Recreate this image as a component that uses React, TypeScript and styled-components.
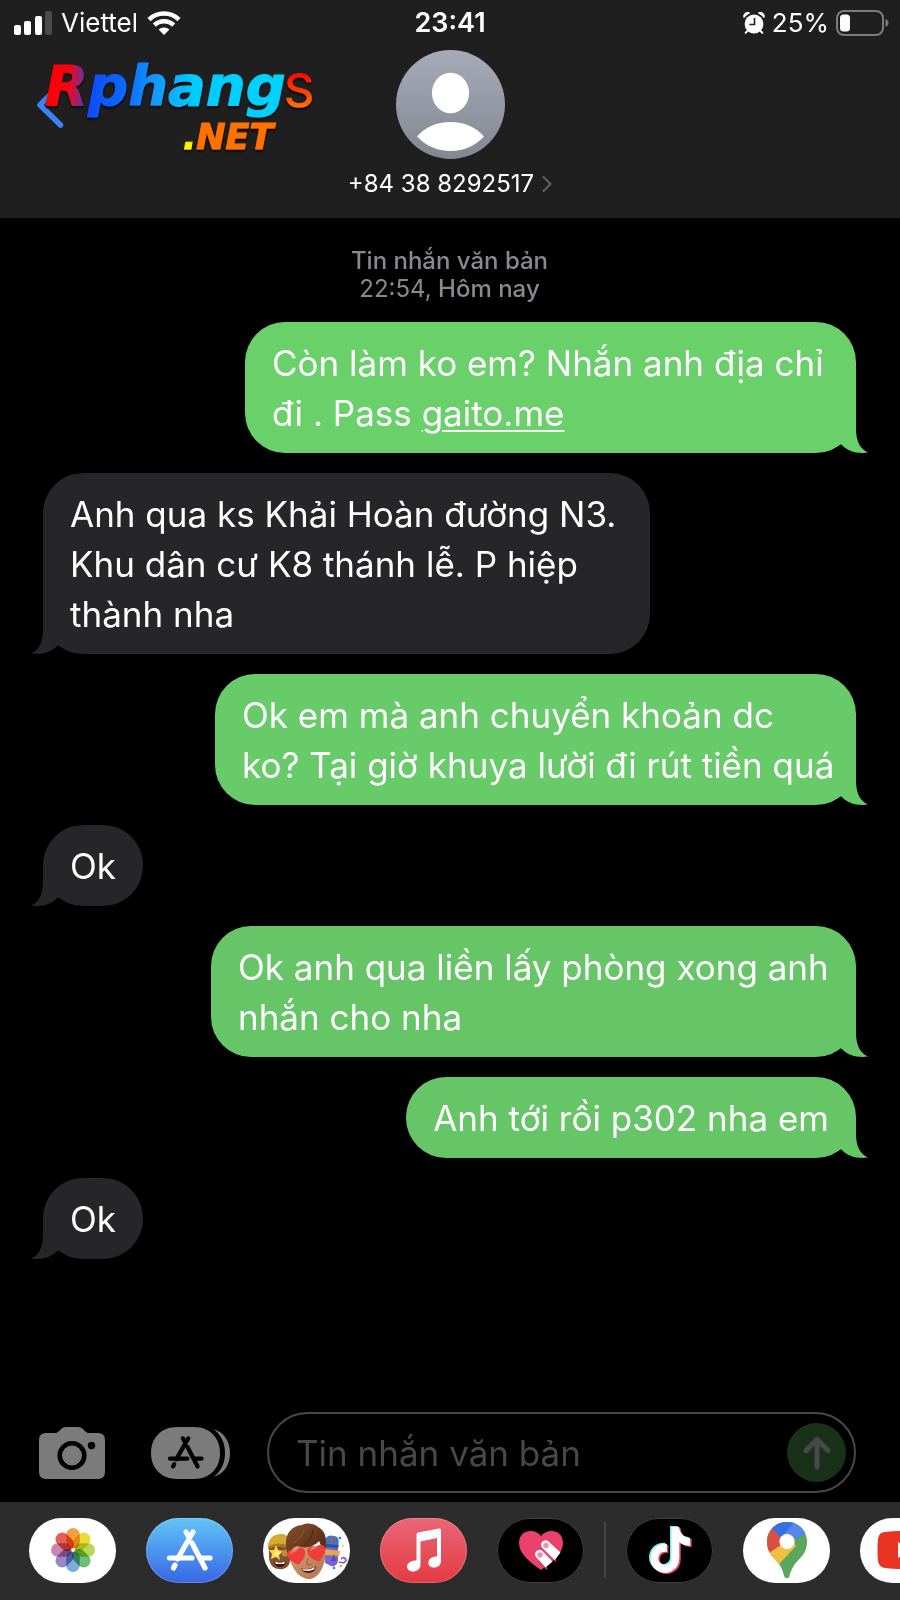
import React from "react";
import styled, { createGlobalStyle } from "styled-components";

const GlobalStyle = createGlobalStyle`
  *, *::before, *::after { box-sizing: border-box; }
  html, body { margin: 0; padding: 0; background: #000; }
  body {
    font-family: Inter, "Noto Sans", sans-serif;
    color: #fff;
    overflow-x: hidden;
  }
  button, input { font: inherit; color: inherit; }
  svg { display: block; }
`;

const Screen = styled.div`
  display: flex;
  flex-direction: column;
  min-height: 100vh;
  overflow: hidden;
`;

const Header = styled.header`
  background: #1f1f1f;
  padding-bottom: 19px;
`;

const StatusBar = styled.div`
  display: grid;
  grid-template-columns: 1fr auto 1fr;
  align-items: center;
  height: 46px;
  padding: 0 11px;
  font-size: 26px;
  line-height: 32px;
`;

const StatusGroup = styled.div<{ $end?: boolean }>`
  display: flex;
  align-items: center;
  gap: ${(p) => (p.$end ? 7 : 9)}px;
  padding-left: 3px;
  justify-content: ${(p) => (p.$end ? "flex-end" : "flex-start")};
`;

const Clock = styled.time`
  font-size: 27px;
  font-weight: 600;
`;

const ContactRow = styled.div`
  display: grid;
  grid-template-columns: 1fr auto 1fr;
  align-items: start;
  padding: 4px 36px 0;
`;

const BackButton = styled.button`
  justify-self: start;
  padding: 0;
  border: 0;
  background: none;
  cursor: pointer;
`;

const ContactButton = styled.button`
  display: flex;
  flex-direction: column;
  align-items: center;
  gap: 10px;
  padding: 0;
  border: 0;
  background: none;
  cursor: pointer;
`;

const ContactName = styled.span`
  display: flex;
  align-items: center;
  gap: 8px;
  font-size: 24px;
  line-height: 30px;
  white-space: nowrap;
`;

const Conversation = styled.main`
  flex: 1;
  padding: 29px 44px 40px 43px;
`;

const DateLabel = styled.div`
  margin-bottom: 19px;
  text-align: center;
  color: #89898e;
  font-size: 24px;
  line-height: 28px;
  font-weight: 500;
`;

const TimeText = styled.time`
  font-weight: 400;
`;

const MessageList = styled.div`
  display: flex;
  flex-direction: column;
  gap: 20px;
`;

type Side = "in" | "out";

const Bubble = styled.div<{ $side: Side; $tone: string; $width?: number }>`
  position: relative;
  isolation: isolate;
  align-self: ${(p) => (p.$side === "out" ? "flex-end" : "flex-start")};
  width: ${(p) => (p.$width ? `${p.$width}px` : "auto")};
  max-width: 100%;
  padding: 16px 27px 15px;
  border-radius: 40px;
  background: ${(p) => p.$tone};
  font-size: 35px;
  line-height: 50px;
  white-space: nowrap;
`;

const Tail = styled.svg<{ $side: Side }>`
  position: absolute;
  z-index: -1;
  bottom: 0;
  ${(p) => (p.$side === "out" ? "right: -12px;" : "left: -12px; transform: scaleX(-1);")}
`;

const MessageLink = styled.a`
  color: inherit;
  text-decoration: underline;
  text-decoration-thickness: 2px;
  text-underline-offset: 4px;
`;

const Composer = styled.form`
  display: flex;
  align-items: center;
  padding: 0 44px 9px 39px;
`;

const ToolButton = styled.button<{ $space: number }>`
  flex: none;
  margin-right: ${(p) => p.$space}px;
  padding: 0;
  border: 0;
  background: none;
  cursor: pointer;
`;

const Field = styled.div`
  flex: 1;
  display: flex;
  align-items: center;
  min-width: 0;
  height: 81px;
  padding: 0 8px 0 27px;
  border: 2px solid #48484a;
  border-radius: 41px;
`;

const TextInput = styled.input`
  flex: 1;
  min-width: 0;
  padding: 0;
  border: 0;
  outline: 0;
  background: none;
  font-size: 35px;
  line-height: 50px;
  &::placeholder { color: #48484a; opacity: 1; }
`;

const SendButton = styled.button`
  flex: none;
  display: grid;
  place-items: center;
  width: 59px;
  height: 59px;
  padding: 0;
  border: 0;
  border-radius: 50%;
  background: #193019;
`;

const Dock = styled.nav`
  display: flex;
  align-items: center;
  gap: 30px;
  height: 98px;
  padding: 0 0 2px 29px;
  background: #2c2c2c;
  overflow: hidden;
`;

const AppButton = styled.button<{ $fill: string; $edge?: string }>`
  flex: none;
  display: grid;
  place-items: center;
  width: 87px;
  height: 65px;
  padding: 0;
  border: 0;
  border-radius: 33px;
  background: ${(p) => p.$fill};
  box-shadow: inset 0 0 0 1px ${(p) => p.$edge ?? "transparent"};
  overflow: hidden;
  cursor: pointer;
`;

const Divider = styled.span`
  flex: none;
  width: 2px;
  height: 56px;
  margin: 0 -10px;
  background: #464646;
`;

const SignalIcon = () => (
  <svg width="38" height="24" viewBox="0 0 38 24" fill="#fff" aria-hidden="true">
    <rect x="0" y="14" width="7" height="10" rx="2" />
    <rect x="10" y="10" width="7" height="14" rx="2" />
    <rect x="21" y="5" width="7" height="19" rx="2" />
    <rect x="31" y="0" width="7" height="24" rx="2" fill="#4a4a4a" />
  </svg>
);

const WifiIcon = () => (
  <svg width="34" height="24" viewBox="0 0 34 24" aria-hidden="true">
    <g fill="none" stroke="#fff" strokeWidth="4.6">
      <path d="M2 8.6A21.5 21.5 0 0 1 32 8.6" />
      <path d="M7.4 14.2A13.6 13.6 0 0 1 26.6 14.2" />
    </g>
    <path d="M17 24l-5.4-5.4a7.8 7.8 0 0 1 10.8 0z" fill="#fff" />
  </svg>
);

const AlarmIcon = () => (
  <svg width="22" height="22" viewBox="0 0 22 22" aria-hidden="true">
    <path d="M1 5.6A13 13 0 0 1 6.6 1 3.8 3.8 0 0 0 1 5.6zM21 5.6A13 13 0 0 0 15.4 1 3.8 3.8 0 0 1 21 5.6z" fill="#fff" stroke="#fff" />
    <path d="M5 18.5l-2.3 2.3M17 18.5l2.3 2.3" stroke="#fff" strokeWidth="2" strokeLinecap="round" />
    <circle cx="11" cy="12" r="9.4" fill="#fff" />
    <path d="M11.5 6v6.5H6.4" fill="none" stroke="#1f1f1f" strokeWidth="1.6" />
  </svg>
);

const BatteryIcon = () => (
  <svg width="53" height="26" viewBox="0 0 53 26" aria-hidden="true">
    <rect x="1" y="1" width="46" height="24" rx="7" fill="none" stroke="#7c7c7c" strokeWidth="2" />
    <rect x="4" y="4.500" width="10" height="17" rx="3.500" fill="#fff" />
    <path d="M49.500 9c4 1.500 4 6.500 0 8z" fill="#7c7c7c" />
  </svg>
);

const BrandLogo = () => (
  <svg width="282" height="106" viewBox="0 0 282 106" aria-hidden="true">
    <defs>
      <linearGradient id="brandMain" gradientUnits="userSpaceOnUse" x1="10" y1="0" x2="252" y2="14">
        <stop offset="0" stopColor="#ff0000" />
        <stop offset="0.1" stopColor="#fb0510" />
        <stop offset="0.165" stopColor="#6a2fa0" />
        <stop offset="0.19" stopColor="#0a4cff" />
        <stop offset="0.32" stopColor="#0a66ff" />
        <stop offset="0.46" stopColor="#1498ff" />
        <stop offset="0.62" stopColor="#00ccff" />
        <stop offset="1" stopColor="#00d2ff" />
      </linearGradient>
      <linearGradient id="brandS" x1="0" y1="0" x2="0" y2="1">
        <stop offset="0.25" stopColor="#ff0a00" />
        <stop offset="0.85" stopColor="#ff7a00" />
      </linearGradient>
      <filter id="brandShadow" x="-5%" y="-10%" width="110%" height="130%">
        <feDropShadow dx="0" dy="2" stdDeviation="1" floodColor="#000" floodOpacity="0.8" />
      </filter>
    </defs>
    <path d="M24 35L4 55l20.500 20" fill="none" stroke="#3d82f7" strokeWidth="5.500" strokeLinecap="round" strokeLinejoin="round" />
    <g filter="url(#brandShadow)">
      <text x="9" y="55" fontFamily="DejaVu Sans" fontWeight="700" fontStyle="oblique" fontSize="56" fill="url(#brandMain)" stroke="url(#brandMain)">Rphang</text>
      <text x="248" y="57" fontFamily="Inter" fontWeight="500" fontSize="47" fill="url(#brandS)">S</text>
      <text x="147" y="99" fontFamily="DejaVu Sans" fontWeight="700" fontStyle="oblique" fontSize="35" fill="#ff7200" stroke="#ff7200">
        <tspan fill="#fff200" stroke="#fff200">.</tspan>NET
      </text>
    </g>
  </svg>
);

const Avatar = () => (
  <svg width="109" height="109" viewBox="0 0 109 109" aria-hidden="true">
    <defs>
      <linearGradient id="avatarFill" x1="0" y1="0" x2="0" y2="1">
        <stop offset="0" stopColor="#a7abb9" />
        <stop offset="1" stopColor="#838791" />
      </linearGradient>
    </defs>
    <circle cx="54.5" cy="54.5" r="54.500" fill="url(#avatarFill)" />
    <ellipse cx="54.500" cy="43" rx="18.600" ry="20.200" fill="#fff" />
    <path d="M21 86.500C29 77 41 72 54.500 72S80 77 88 86.500C79 96 68 101 54.500 101S30 96 21 86.500z" fill="#fff" />
  </svg>
);

const NameChevron = () => (
  <svg width="10" height="18" viewBox="0 0 10 18" aria-hidden="true">
    <path d="M1.500 2L8.500 9l-7 7" fill="none" stroke="#626266" strokeWidth="2" strokeLinecap="round" />
  </svg>
);

const BubbleTail = ({ side, tone }: { side: Side; tone: string }) => (
  <Tail $side={side} width="46" height="44" viewBox="0 0 46 44" aria-hidden="true">
    <path d="M34 2V20C34 32 38 40 46 43.500C37 45 26 43 20 36L6 30 20 4z" fill={tone} />
  </Tail>
);

const CameraIcon = () => (
  <svg width="66" height="52" viewBox="0 0 66 52" aria-hidden="true">
    <path d="M7 6H16C19 6 20 4 22 2Q24 0 27 0H39Q42 0 44 2C46 4 47 6 50 6H59Q66 6 66 13V45Q66 52 59 52H7Q0 52 0 45V13Q0 6 7 6z" fill="#7b7b7b" />
    <circle cx="33" cy="28.500" r="12.300" fill="none" stroke="#000" strokeWidth="4.600" />
    <circle cx="52.500" cy="18.500" r="3.700" fill="#000" />
  </svg>
);

const StoreGlyph = () => (
  <>
    <path d="M19 3L22.500 9M26 3L10.500 30" />
    <path d="M2.500 29H25M33 29H43" />
    <path d="M8 36L6.500 39" />
    <path d="M25 14L38 39" />
  </>
);

const DrawerIcon = () => (
  <svg width="80" height="52" viewBox="0 0 80 52" aria-hidden="true">
    <path d="M26 0H43C59 0 69 11 69 26S59 52 43 52H26C10 52 0 41 0 26S10 0 26 0z" fill="#7b7b7b" />
    <path d="M62 2C73 5 79 14 79 26S73 47 62 50C70 45 74 36 74 26S70 7 62 2z" fill="#7b7b7b" />
    <g fill="none" stroke="#000" strokeWidth="5.400" strokeLinecap="round" transform="translate(17 9) scale(.78)">
      <StoreGlyph />
    </g>
  </svg>
);

const ArrowUp = () => (
  <svg width="28" height="34" viewBox="0 0 28 34" aria-hidden="true">
    <path d="M14 31V4M3 14.500L14 3.500l11 11" fill="none" stroke="#48484a" strokeWidth="5" strokeLinecap="round" strokeLinejoin="round" />
  </svg>
);

const petals = ["#f29a38", "#ead92f", "#b6d34f", "#68bb6c", "#6fa8dc", "#9583bd", "#c77fae", "#e4584c"];

const PhotosIcon = () => (
  <svg width="46" height="46" viewBox="-23 -23 46 46" aria-hidden="true">
    {petals.map((color, i) => (
      <rect
        key={color}
        x="-6.800"
        y="-22"
        width="13.600"
        height="20.500"
        rx="6.800"
        fill={color}
        fillOpacity="0.95"
        transform={`rotate(${i * 45})`}
        style={{ mixBlendMode: "multiply" }}
      />
    ))}
    <circle r="1.500" fill="#fff" />
  </svg>
);

const StoreIcon = () => (
  <svg width="46" height="42" viewBox="0 0 46 42" fill="none" stroke="#fff" strokeWidth="5.200" strokeLinecap="round" aria-hidden="true">
    <StoreGlyph />
  </svg>
);

const MemojiIcon = () => (
  <svg width="87" height="65" viewBox="0 0 87 65" aria-hidden="true">
    <defs>
      <linearGradient id="skin" x1="0" y1="0" x2="1" y2="1">
        <stop offset="0" stopColor="#d79e78" />
        <stop offset="1" stopColor="#b0744f" />
      </linearGradient>
      <linearGradient id="hair" x1="0" y1="0" x2="1" y2="1">
        <stop offset="0" stopColor="#85502c" />
        <stop offset="0.5" stopColor="#6b3c1f" />
        <stop offset="1" stopColor="#482512" />
      </linearGradient>
      <path id="heart" d="M0 8C-6 4-9 0-9-4-9-9-2-10 0-5 2-10 9-9 9-4 9 0 6 4 0 8z" />
    </defs>
    <path d="M6 28H27V42C27 49 21 52 16 51 10 51 6 46 6 38z" fill="#80502f" />
    <path d="M5 31C4 21 11 15 20 16 25 17 28 22 27 31 20 27 12 27 5 31z" fill="#d5aa32" />
    <path d="M6 28Q16 23 27 28V31Q15 26 5 31z" fill="#a77d1f" />
    <path d="M13 27l2 5 5 1-4 4 1 5-4-3-5 2 1-5-3-4 5 0z" fill="#ffd83e" />
    <path d="M14 31l1 3 3 1-3 2-1 2-1-2-3-1 3-2z" fill="#fff3b0" />
    <circle cx="22" cy="35" r="3.500" fill="#b98f32" />
    <path d="M11 43Q17 46 23 43 22 49 17 49 12 49 11 43z" fill="#3b1414" />
    <path d="M12 43.500Q17 46 22 43.500L21 46H13z" fill="#fff" />
    <path d="M61 26H75V42C75 47 71 49 68 48L62 45z" fill="#7965d0" />
    <path d="M61 26C61 19 66 16 71 18 75 18 77 22 75 28L62 27z" fill="#3f79bd" />
    <path d="M61 26L76 27 75 30 62 29z" fill="#29539a" />
    <path d="M61 31L77 33 76 38 61 37z" fill="#e2a849" />
    <path d="M71 36l2 7h-5z" fill="#5746b8" />
    <path d="M76 44q7 2 7-2-2-4-5-1" fill="none" stroke="#8b5fc5" strokeWidth="1.800" />
    <circle cx="69" cy="22" r="2" fill="#d84355" />
    <circle cx="77" cy="20" r="1.300" fill="#3979ee" />
    <circle cx="80" cy="28" r="1.300" fill="#ffe04b" />
    <circle cx="78" cy="48" r="1.300" fill="#f39a3a" />
    <circle cx="71" cy="50" r="1.300" fill="#3979ee" />
    <path d="M27 28H61L62 39C61 51 54 61 46 61S30 53 27 42z" fill="url(#skin)" />
    <path d="M24 34C20 18 27 8 39 7 45 4 52 6 55 9 63 13 65 22 61 36L59 36C59 30 58 27 56 23 51 29 42 31 34 28 30 29 28 32 27 37z" fill="url(#hair)" />
    <path d="M31 25Q39 19 41 12" fill="none" stroke="#965f38" strokeWidth="1" strokeLinecap="round" />
    <path d="M42 27Q50 20 50 12" fill="none" stroke="#452410" strokeWidth="1" strokeLinecap="round" />
    <path d="M45 40L44 46Q46 48 49 46" fill="none" stroke="#a56646" strokeWidth="1.300" />
    <path d="M38 50Q46 53 53 48 53 54 46 55 40 55 38 50z" fill="#5c1719" />
    <path d="M39 50.500Q46 53 52 49L51 51.500Q45 54 40 52z" fill="#fff" />
    <use href="#heart" transform="translate(34 39) rotate(-12)" fill="#ef3e38" />
    <use href="#heart" transform="translate(54 36) rotate(-12)" fill="#ef3e38" />
    <path d="M28 35q1-2 3-2M48 32q1-2 3-2" stroke="#ff8b80" strokeWidth="1.500" fill="none" strokeLinecap="round" />
  </svg>
);

const MusicIcon = () => (
  <svg width="36" height="44" viewBox="0 0 36 44" fill="#fff" aria-hidden="true">
    <path d="M10.500 6.500Q10.500 4.800 12 4.500L33 .500Q35 0 35 2V33C35 37 32 39.500 28 39.500 24 39.500 22 37 22.500 34 23 30 27 28.500 31 28.500V10L14.500 13.500V37C14.500 41 11 43.500 7 43.500 3 43.500 1 41 1 38 2 34 6 32.500 10.500 32.500z" />
  </svg>
);

const TouchIcon = () => (
  <svg width="46" height="40" viewBox="0 0 46 40" aria-hidden="true">
    <path d="M23 40C13 33 1 24 1 13 1-1 17-2 23 6 29-2 45-1 45 13 45 24 33 33 23 40z" fill="#ec416d" />
    <path d="M27 19L38 31M21 30L29 39" stroke="#c92f58" strokeWidth="2" />
    <g fill="#fff">
      <path d="M24.500 18A4.300 4.300 0 0 1 30.500 11.500L42.500 22.500 38 28.500 36.500 30z" />
      <path d="M18.500 27.500A4.300 4.300 0 0 1 24.500 21L34.500 31.500 27.500 37.500z" />
    </g>
    <circle cx="28" cy="15.500" r="2.700" fill="#f091ac" />
    <circle cx="22" cy="25" r="2.700" fill="#f091ac" />
  </svg>
);

const TIKTOK_NOTE =
  "M448 209.910a210.060 210.060 0 0 1-122.770-39.250V349.380A162.550 162.550 0 1 1 185 188.310V278.200a74.620 74.620 0 1 0 52.230 71.180V0l88 0a121.180 121.180 0 0 0 1.860 22.170h0A122.180 122.180 0 0 0 381 102.390a121.430 121.430 0 0 0 67 20.140z";

const TikTokIcon = () => (
  <svg width="44" height="50" viewBox="0 0 44 50" aria-hidden="true">
    <g transform="translate(1 1) scale(.0885 .0895)">
      <path d={TIKTOK_NOTE} fill="#74f0ed" />
      <path d={TIKTOK_NOTE} fill="#ea445a" transform="translate(34 24)" />
      <path d={TIKTOK_NOTE} fill="#fff" transform="translate(17 12)" />
    </g>
  </svg>
);

const MapsIcon = () => (
  <svg width="42" height="56" viewBox="0 0 42 56" aria-hidden="true">
    <defs>
      <clipPath id="pinShape">
        <path d="M21 0C9 0 1 9 1 20 1 31 8 36 13 42 17 47 18 55 19 55.500Q21 56.500 23 55.500C24 51 26 46 29 42 34 36 41 31 41 20 41 9 33 0 21 0z" />
      </clipPath>
    </defs>
    <g clipPath="url(#pinShape)">
      <rect width="42" height="56" fill="#5aa65c" />
      <path d="M0 32L21 8 30 24 13 42 0 40z" fill="#f1bf42" />
      <path d="M0 8L7 7 21 19 3 31H0z" fill="#da5040" />
      <path d="M5 5L10-2H42V10L21 22z" fill="#5687ed" />
      <path d="M5 5L10-2H30L15 16z" fill="#3771df" />
    </g>
    <circle cx="21" cy="19.500" r="7.600" fill="#fff" />
  </svg>
);

const YouTubeIcon = () => (
  <svg width="53" height="38" viewBox="0 0 53 38" aria-hidden="true">
    <path d="M8 1Q26-1 45 1 51 1 52 8 53 19 52 30 51 36 45 37 26 39 8 37 2 36 1 30 0 19 1 8 2 1 8 1z" fill="#e93323" />
    <path d="M21 11V27L35 19z" fill="#fff" />
  </svg>
);

interface Message {
  side: Side;
  tone: string;
  width?: number;
  body: React.ReactNode;
}

const GREY = "#262628";

const messages: Message[] = [
  {
    side: "out",
    tone: "#6ad16a",
    width: 611,
    body: (
      <>
        Còn làm ko em? Nhắn anh địa chỉ
        <br />
        đi . Pass <MessageLink href="#gaito.me">gaito.me</MessageLink>
      </>
    ),
  },
  {
    side: "in",
    tone: GREY,
    width: 607,
    body: (
      <>
        Anh qua ks Khải Hoàn đường N3.
        <br />
        Khu dân cư K8 thánh lễ. P hiệp
        <br />
        thành nha
      </>
    ),
  },
  {
    side: "out",
    tone: "#68cb69",
    width: 641,
    body: (
      <>
        Ok em mà anh chuyển khoản dc
        <br />
        ko? Tại giờ khuya lười đi rút tiền quá
      </>
    ),
  },
  { side: "in", tone: GREY, body: "Ok" },
  {
    side: "out",
    tone: "#66c667",
    width: 645,
    body: (
      <>
        Ok anh qua liền lấy phòng xong anh
        <br />
        nhắn cho nha
      </>
    ),
  },
  { side: "out", tone: "#66c567", body: "Anh tới rồi p302 nha em" },
  { side: "in", tone: GREY, body: "Ok" },
];

export default function App() {
  return (
    <Screen>
      <GlobalStyle />
      <Header>
        <StatusBar>
          <StatusGroup>
            <SignalIcon />
            <span>Viettel</span>
            <WifiIcon />
          </StatusGroup>
          <Clock>23:41</Clock>
          <StatusGroup $end>
            <AlarmIcon />
            <span>25%</span>
            <BatteryIcon />
          </StatusGroup>
        </StatusBar>
        <ContactRow>
          <BackButton type="button" aria-label="Quay lại">
            <BrandLogo />
          </BackButton>
          <ContactButton type="button">
            <Avatar />
            <ContactName>
              +84 38 8292517
              <NameChevron />
            </ContactName>
          </ContactButton>
        </ContactRow>
      </Header>

      <Conversation>
        <DateLabel>
          Tin nhắn văn bản
          <br />
          <TimeText>22:54,</TimeText> Hôm nay
        </DateLabel>
        <MessageList>
          {messages.map((message, i) => (
            <Bubble key={i} $side={message.side} $tone={message.tone} $width={message.width}>
              <BubbleTail side={message.side} tone={message.tone} />
              {message.body}
            </Bubble>
          ))}
        </MessageList>
      </Conversation>

      <Composer onSubmit={(e) => e.preventDefault()}>
        <ToolButton type="button" $space={46} aria-label="Máy ảnh">
          <CameraIcon />
        </ToolButton>
        <ToolButton type="button" $space={36} aria-label="Ứng dụng">
          <DrawerIcon />
        </ToolButton>
        <Field>
          <TextInput type="text" placeholder="Tin nhắn văn bản" aria-label="Tin nhắn văn bản" />
          <SendButton type="submit" aria-label="Gửi">
            <ArrowUp />
          </SendButton>
        </Field>
      </Composer>

      <Dock aria-label="Ứng dụng">
        <AppButton type="button" aria-label="Ảnh" $fill="#fff">
          <PhotosIcon />
        </AppButton>
        <AppButton type="button" aria-label="App Store" $fill="linear-gradient(#61c5f6, #3767e6)" $edge="#ffffff33">
          <StoreIcon />
        </AppButton>
        <AppButton type="button" aria-label="Memoji" $fill="#fff">
          <MemojiIcon />
        </AppButton>
        <AppButton type="button" aria-label="Nhạc" $fill="linear-gradient(#ea6677, #e43a43)" $edge="#ffffff33">
          <MusicIcon />
        </AppButton>
        <AppButton type="button" aria-label="Digital Touch" $fill="#000" $edge="#424242">
          <TouchIcon />
        </AppButton>
        <Divider />
        <AppButton type="button" aria-label="TikTok" $fill="#000" $edge="#424242">
          <TikTokIcon />
        </AppButton>
        <AppButton type="button" aria-label="Google Maps" $fill="#fff">
          <MapsIcon />
        </AppButton>
        <AppButton type="button" aria-label="YouTube" $fill="#fff">
          <YouTubeIcon />
        </AppButton>
      </Dock>
    </Screen>
  );
}
